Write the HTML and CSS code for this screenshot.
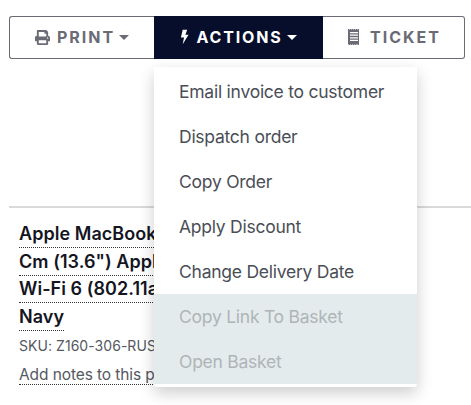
FILE: index.html
```html
<!DOCTYPE html>
<html lang="en">
<head>
<meta charset="utf-8">
<title>Order actions</title>
<link rel="stylesheet" href="styles.css">
</head>
<body>
<div class="toolbar">
  <button class="btn btn-print">
    <svg class="icon" width="15" height="15" viewBox="0 0 512 512"><path fill="currentColor" d="M448 192V77.25c0-8.49-3.37-16.62-9.37-22.63L393.37 9.37C387.37 3.37 379.23 0 370.75 0H96C78.33 0 64 14.33 64 32v160c-35.35 0-64 28.65-64 64v112c0 8.84 7.16 16 16 16h48v96c0 17.67 14.33 32 32 32h320c17.67 0 32-14.33 32-32v-96h48c8.84 0 16-7.16 16-16V256c0-35.35-28.65-64-64-64zm-64 256H128v-96h256v96zm0-224H128V64h192v48c0 8.84 7.16 16 16 16h48v96zm48 72c-13.25 0-24-10.75-24-24 0-13.26 10.75-24 24-24s24 10.74 24 24c0 13.25-10.75 24-24 24z"/></svg>
    <span>PRINT</span><i class="caret"></i>
  </button>
  <button class="btn btn-actions">
    <svg class="icon" width="9" height="16" viewBox="0 0 10 17"><path fill="currentColor" d="M3 .5h5L6 6h3.5L3 16.5 4.500 9H1z"/></svg>
    <span>ACTIONS</span><i class="caret"></i>
  </button>
  <button class="btn btn-ticket">
    <svg class="icon" width="12" height="16" viewBox="0 0 12 16"><path fill="currentColor" fill-rule="evenodd" d="M0 0h1v.6h1V0h1v.6h1V0h1v.6h1V0h1v.6h1V0h1v.6h1V0h1v16h-1v-.6h-1v.6H9v-.6H8v.6H7v-.6H6v.6H5v-.6H4v.6H3v-.6H2v.6H1v-.6H0zM2 3v1.200h8V3zm0 2.600v1.200h8V5.600zm0 2.600v1.200h8V8.200zm0 2.600V12h8v-1.200z"/></svg>
    <span>TICKET</span>
  </button>
</div>
<div class="divider"></div>
<div class="product">
  <div class="title"><a>Apple MacBook Air M2 Laptop 34.5</a><br><a>Cm (13.6") Apple M2 Chip 8-Core</a><br><a>Wi-Fi 6 (802.11ax) 256 GB SSD</a><br><a>Navy</a></div>
  <div class="sku">SKU: Z160-306-RUS</div>
  <div class="notes"><a>Add notes to this product line</a></div>
</div>
<ul class="menu">
  <li>Email invoice to customer</li>
  <li>Dispatch order</li>
  <li>Copy Order</li>
  <li>Apply Discount</li>
  <li>Change Delivery Date</li>
  <li class="disabled">Copy Link To Basket</li>
  <li class="disabled">Open Basket</li>
</ul>
</body>
</html>
```
FILE: styles.css
```css
html, body { margin: 0; padding: 0; }
body {
  position: relative;
  width: 471px;
  height: 405px;
  overflow: hidden;
  background: #fff;
  font-family: Inter, "Noto Sans", sans-serif;
}
.toolbar {
  display: flex;
  width: 456px;
  height: 43px;
  margin: 16px 0 0 9px;
  box-sizing: border-box;
}
.btn {
  display: flex;
  align-items: center;
  justify-content: center;
  gap: 7px;
  box-sizing: border-box;
  height: 43px;
  padding: 0 0 1px;
  background: #fff;
  color: #6b6b76;
  border: 1px solid #6b6b76;
  font-family: Inter, sans-serif;
  font-size: 16px;
  font-weight: 700;
  letter-spacing: 2px;
}
.btn-print { width: 145px; border-right: 0; border-radius: 3px 0 0 3px; }
.btn-actions { width: 169px; background: #060e2b; border-color: #060e2b; color: #fff; letter-spacing: 1.85px; }
.btn-ticket { width: 142px; border-left: 0; border-radius: 0 3px 3px 0; gap: 10px; padding-left: 2px; }
.icon { display: block; flex: none; }
.caret {
  width: 0;
  height: 0;
  margin-left: -3px;
  border-left: 5px solid transparent;
  border-right: 5px solid transparent;
  border-top: 5px solid currentColor;
}
.divider {
  height: 2px;
  margin: 147px 0 0 9px;
  background: #d9d9d9;
}
.product {
  margin: 12px 0 0 19px;
}
.title {
  font-size: 18px;
  font-weight: 600;
  line-height: 27.500px;
  letter-spacing: 0.05px;
  color: #14151f;
}
.title a {
  border-bottom: 1px dotted #333;
  padding-bottom: 3px;
}
.sku {
  margin-top: 5px;
  font-size: 14px;
  line-height: 22px;
  letter-spacing: 0.05px;
  color: #55585f;
}
.notes {
  margin-top: 7px;
  font-size: 15.500px;
  line-height: 22px;
  letter-spacing: -0.1px;
  color: #55585f;
}
.notes a { border-bottom: 1px dotted #333; }
.menu {
  position: absolute;
  left: 154px;
  top: 67px;
  width: 263px;
  margin: 0;
  padding: 2px 0 3px;
  box-sizing: border-box;
  list-style: none;
  background: #fff;
  border-radius: 0 0 3px 3px;
  box-shadow: 0 6px 16px rgba(0, 0, 0, 0.2);
}
.menu li {
  height: 45px;
  padding: 0 25px;
  font-size: 17.500px;
  line-height: 45px;
  letter-spacing: -0.25px;
  color: #4a4e57;
  white-space: nowrap;
}
.menu li.disabled {
  background: #e4ebed;
  color: #aeb5b7;
}
```
